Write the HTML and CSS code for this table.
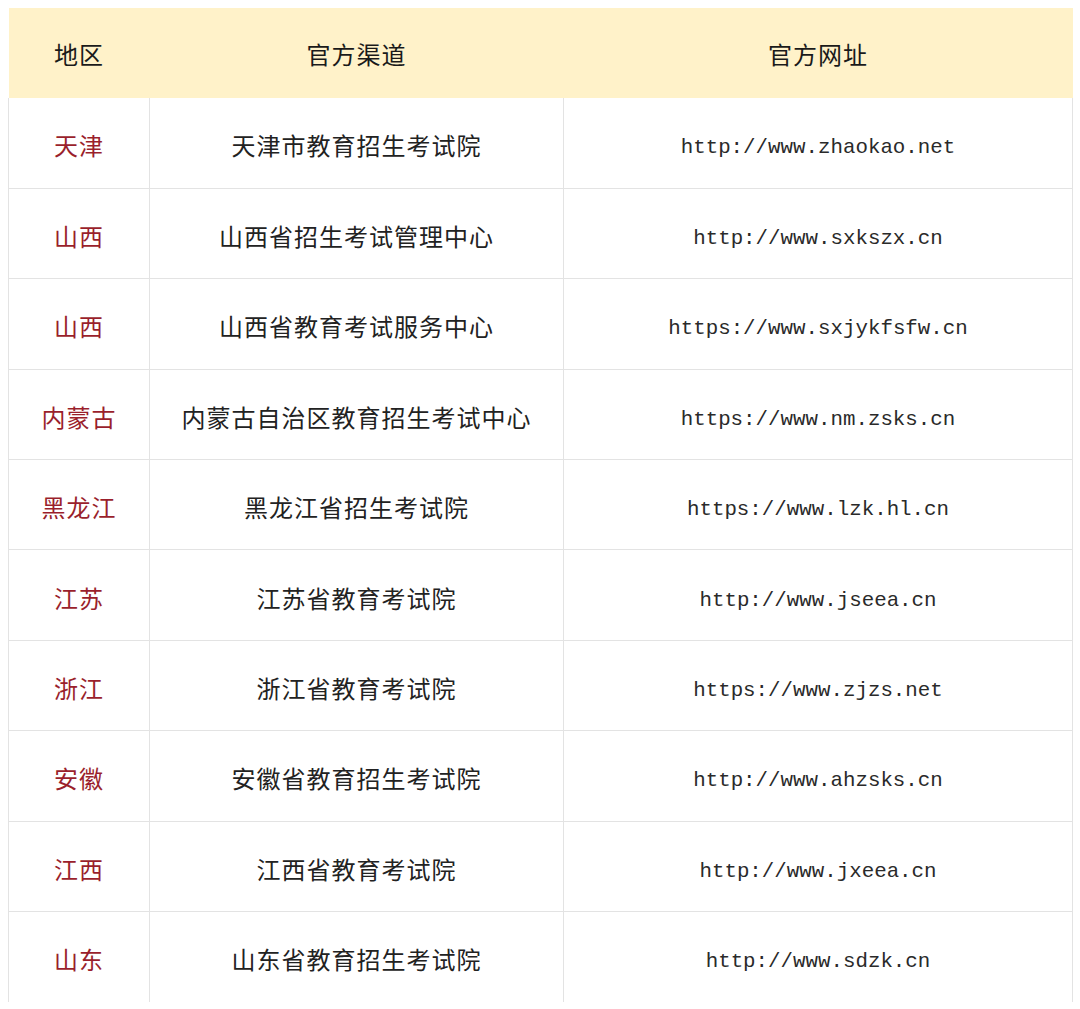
FILE: index.html
```html
<!DOCTYPE html>
<html lang="zh-CN">
<head>
<meta charset="utf-8">
<link rel="stylesheet" href="styles.css">
</head>
<body>
<table class="sites">
  <colgroup>
    <col class="c-region">
    <col class="c-name">
    <col class="c-url">
  </colgroup>
  <thead>
    <tr><th>地区</th><th>官方渠道</th><th>官方网址</th></tr>
  </thead>
  <tbody>
    <tr><td class="region">天津</td><td>天津市教育招生考试院</td><td class="url">http://www.zhaokao.net</td></tr>
    <tr><td class="region">山西</td><td>山西省招生考试管理中心</td><td class="url">http://www.sxkszx.cn</td></tr>
    <tr><td class="region">山西</td><td>山西省教育考试服务中心</td><td class="url">https://www.sxjykfsfw.cn</td></tr>
    <tr><td class="region">内蒙古</td><td>内蒙古自治区教育招生考试中心</td><td class="url">https://www.nm.zsks.cn</td></tr>
    <tr><td class="region">黑龙江</td><td>黑龙江省招生考试院</td><td class="url">https://www.lzk.hl.cn</td></tr>
    <tr><td class="region">江苏</td><td>江苏省教育考试院</td><td class="url">http://www.jseea.cn</td></tr>
    <tr><td class="region">浙江</td><td>浙江省教育考试院</td><td class="url">https://www.zjzs.net</td></tr>
    <tr><td class="region">安徽</td><td>安徽省教育招生考试院</td><td class="url">http://www.ahzsks.cn</td></tr>
    <tr><td class="region">江西</td><td>江西省教育考试院</td><td class="url">http://www.jxeea.cn</td></tr>
    <tr class="last"><td class="region">山东</td><td>山东省教育招生考试院</td><td class="url">http://www.sdzk.cn</td></tr>
  </tbody>
</table>
</body>
</html>
```
FILE: styles.css
```css
html, body {
  margin: 0;
  padding: 0;
  background: #ffffff;
}
body {
  padding: 8px 8px 0 8px;
  font-family: "Noto Sans CJK SC", "Noto Sans", sans-serif;
  color: #222222;
}
.sites {
  width: 1064px;
  border-collapse: collapse;
  table-layout: fixed;
}
.c-region { width: 141px; }
.c-name { width: 414px; }
.c-url { width: 509px; }
.sites th {
  height: 90px;
  padding: 0;
  background: #fff2c9;
  font-weight: 400;
  font-size: 24px;
  color: #1a1a1a;
  text-align: center;
  vertical-align: middle;
  border: none;
  letter-spacing: 1px;
  box-sizing: border-box;
}
.sites td {
  height: 90.4px;
  padding: 4px 0 0 0;
  border: 1px solid #e3e3e3;
  border-top: none;
  text-align: center;
  vertical-align: middle;
  font-size: 24px;
  letter-spacing: 1px;
  color: #222222;
  box-sizing: border-box;
}
.sites tr.last td {
  border-bottom: none;
}
.sites td.region {
  color: #9a1f2c;
}
.sites td.url {
  padding-top: 10px;
  font-family: "Liberation Mono", "DejaVu Sans Mono", monospace;
  font-size: 20.8px;
  letter-spacing: 0;
  color: #2a2a2a;
}
```
